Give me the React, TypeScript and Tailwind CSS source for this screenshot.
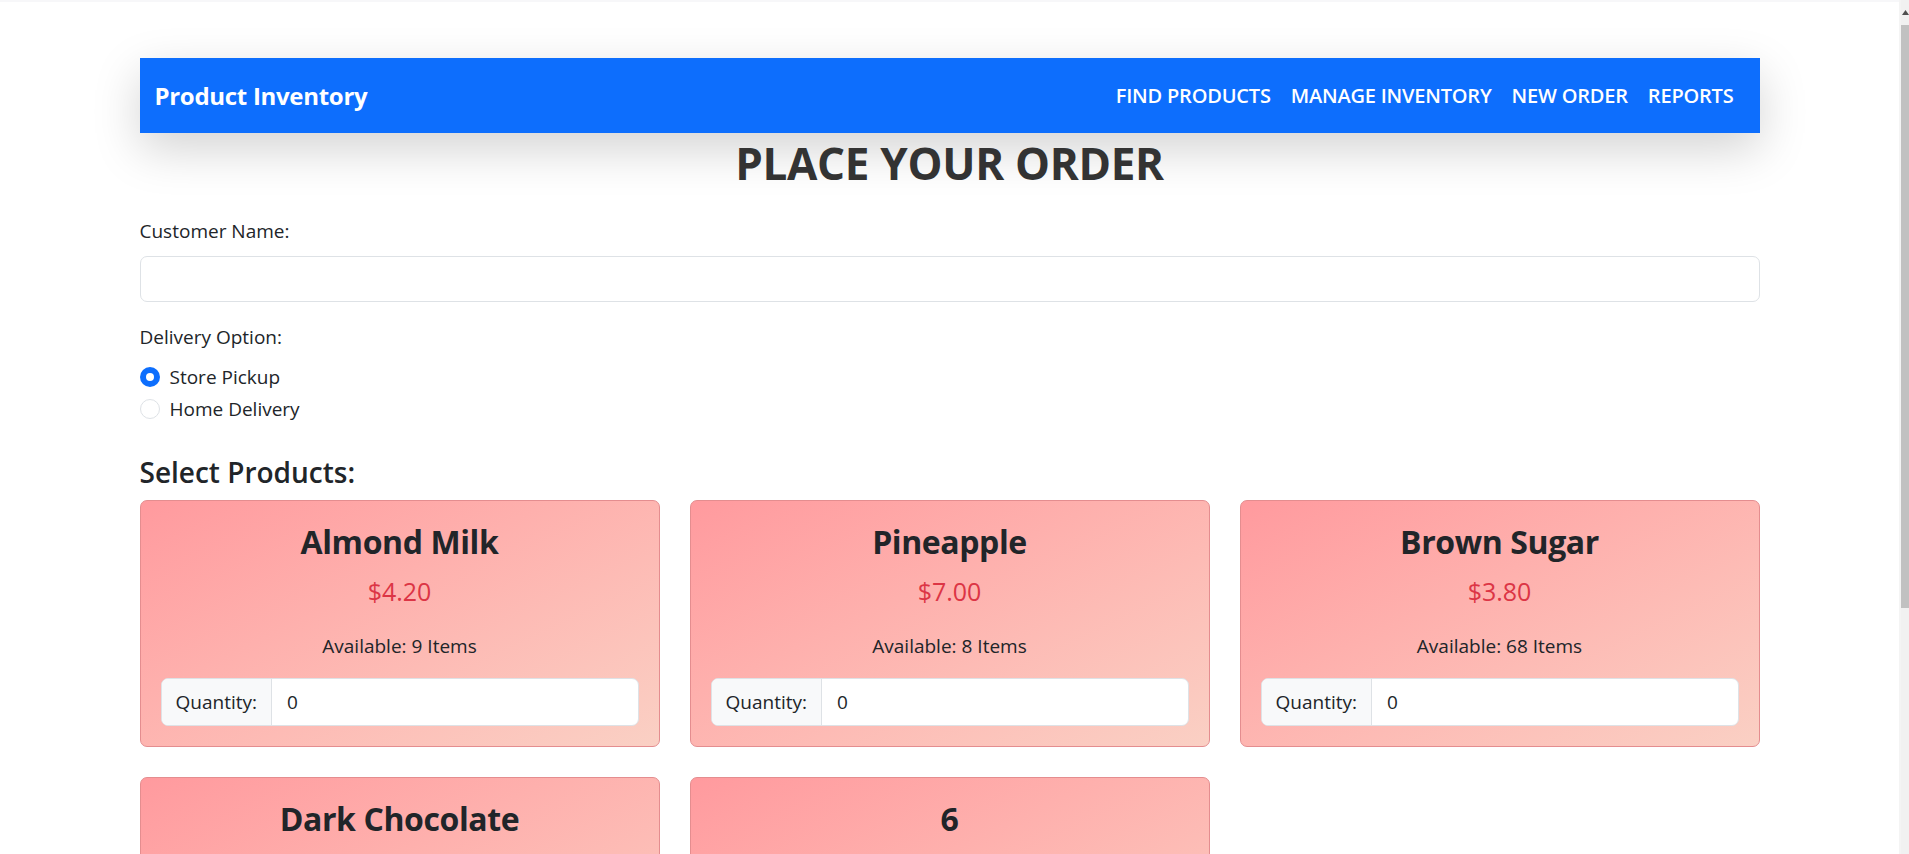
import React from 'react';

const products = [
  { id: 1, name: 'Almond Milk', price: '$4.20', available: 9 },
  { id: 2, name: 'Pineapple', price: '$7.00', available: 8 },
  { id: 3, name: 'Brown Sugar', price: '$3.80', available: 68 },
  { id: 4, name: 'Dark Chocolate', price: '$5.50', available: 14 },
  { id: 5, name: '6', price: '$6.00', available: 6 },
];

const navLinks = ['FIND PRODUCTS', 'MANAGE INVENTORY', 'NEW ORDER', 'REPORTS'];

function ProductCard({ name, price, available }: { name: string; price: string; available: number }) {
  return (
    <div className="rounded-[7px] border border-[#e48d8f] bg-gradient-to-br from-[#ff9a9e] to-[#fad0c4] p-5 text-center">
      <h3 className="mb-[13px] text-[32px] leading-[42px] font-bold tracking-[-0.4px] text-[#212529]">{name}</h3>
      <h5 className="mb-[25px] text-[25px] leading-[30px] text-[#dc3545]">{price}</h5>
      <p className="mb-[17px] text-[19px] leading-[30px] text-[#212529]">Available: {available} Items</p>
      <div className="flex h-[48px] overflow-hidden rounded-[7px] border border-[#dee2e6] bg-white text-left text-[19px]">
        <span className="flex items-center border-r border-[#dee2e6] bg-[#f8f9fa] px-[14px] text-[#212529]">Quantity:</span>
        <span className="flex flex-1 items-center px-[15px] text-[#212529]">0</span>
      </div>
    </div>
  );
}

export default function App() {
  return (
    <div className="flex h-[854px] overflow-hidden bg-white font-['Open_Sans','Noto_Sans',sans-serif] text-[#212529]">
      <div className="flex-1">
        <div className="h-[2px] bg-[#f7f7f9]" />
        <div className="mx-auto w-[1620px]">
          {/* NAVBAR */}
          <nav className="mt-[56px] flex h-[75px] items-center justify-between bg-[#0d6efd] pr-[16px] pl-[15px] shadow-[0_16px_48px_rgba(0,0,0,0.175)]">
            <span className="text-[24px] font-bold tracking-[-0.3px] text-white">Product Inventory</span>
            <div className="flex">
              {navLinks.map((link) => (
                <span key={link} className="px-[10px] text-[20px] font-semibold tracking-[-0.2px] text-white">
                  {link}
                </span>
              ))}
            </div>
          </nav>

          {/* TITLE */}
          <h1 className="mb-[23px] text-center text-[44px] leading-[60px] font-bold tracking-[-0.3px] text-[#333333]">
            PLACE YOUR ORDER
          </h1>

          {/* FORM */}
          <label className="mb-[10px] block text-[19px] leading-[30px]">Customer Name:</label>
          <div className="h-[46px] rounded-[7px] border border-[#dee2e6] bg-white" />

          <label className="mt-[20px] mb-[10px] block text-[19px] leading-[30px]">Delivery Option:</label>
          <div className="flex flex-col gap-[2px]">
            <div className="flex h-[30px] items-center gap-[10px]">
              <span className="flex h-[20px] w-[20px] items-center justify-center rounded-full bg-[#0d6efd]">
                <span className="h-[8px] w-[8px] rounded-full bg-white" />
              </span>
              <span className="text-[19px]">Store Pickup</span>
            </div>
            <div className="flex h-[30px] items-center gap-[10px]">
              <span className="h-[20px] w-[20px] rounded-full border border-[#dee2e6] bg-white" />
              <span className="text-[19px]">Home Delivery</span>
            </div>
          </div>

          <h4 className="mt-[30px] mb-[10px] text-[28px] leading-[36px] font-semibold">Select Products:</h4>

          {/* PRODUCTS */}
          <div className="grid grid-cols-3 gap-[30px]">
            {products.map((p) => (
              <ProductCard key={p.id} name={p.name} price={p.price} available={p.available} />
            ))}
          </div>
        </div>
      </div>

      {/* SCROLLBAR */}
      <div className="w-[10px] border-l-2 border-[#f4f4f4] bg-[#f1f1f1]">
        <div className="flex h-[25px] items-center justify-center">
          <svg width="7" height="5" viewBox="0 0 7 5">
            <polygon points="3.5,0 7,5 0,5" fill="#505050" />
          </svg>
        </div>
        <div className="h-[583px] bg-[#c1c1c1]" />
      </div>
    </div>
  );
}
